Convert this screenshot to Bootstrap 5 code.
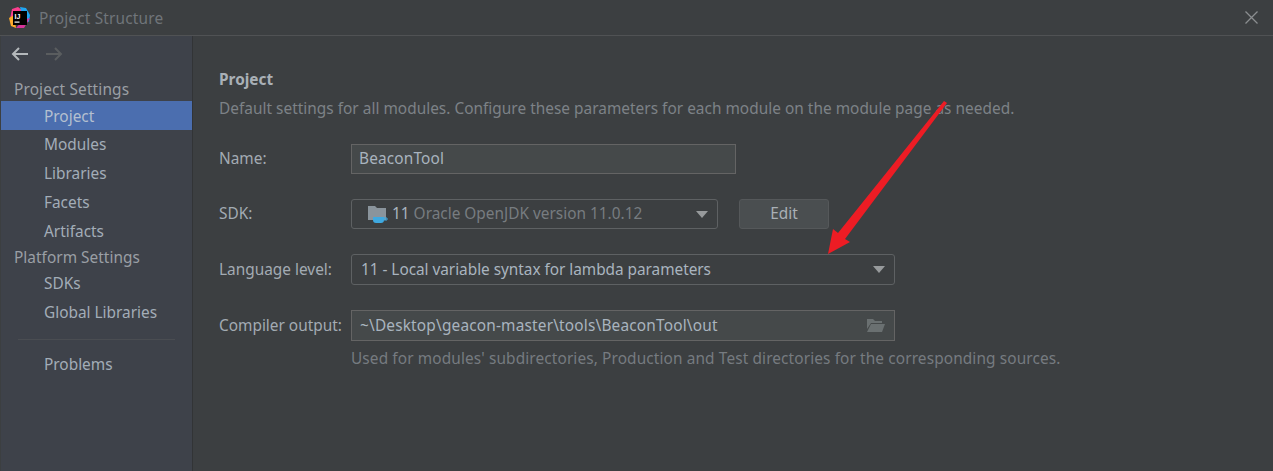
<!DOCTYPE html>
<html lang="en">
<head>
    <meta charset="UTF-8">
    <title>Project Structure</title>
    <link href="https://cdn.jsdelivr.net/npm/bootstrap@5.3.0/dist/css/bootstrap.min.css" rel="stylesheet">
    <style>
        html, body { height: 100%; }
        body {
            background: #3c3f41;
            color: #a9b2bb;
            font-family: "Noto Sans", sans-serif;
            font-size: 15.4px;
            line-height: 20px;
            overflow: hidden;
        }
        .dlg { height: 471px; position: relative; }
        .title-bar {
            height: 36px;
            padding-left: 9px;
            border-bottom: 1px solid #505254;
            color: #70757a;
            background: #3c3f41;
            letter-spacing: .18px;
        }
        .title-bar span { padding-top: 2px; }
        .side {
            width: 192px;
            height: 435px;
            margin-left: 1px;
            background: #3e424a;
            border-right: 1px solid #323436;
        }
        .nav-arrows { height: 36px; padding-left: 10px; gap: 16px; margin-bottom: 6px; }
        .side-head { height: 23px; padding-left: 13px; color: #9a9fa5; line-height: 23px; letter-spacing: .15px; }
        .side-head.tight { letter-spacing: .03px; }
        .side-item { height: 29px; padding-left: 43px; line-height: 29px; color: #a3adb8; }
        .side-item.on { background: #4b6eaf; color: #b4c0d0; line-height: 31px; }
        .side-sep { height: 1px; background: #4a4d52; margin: 12px 17px 10px 17px; }
        .pane { padding: 34px 0 0 26px; }
        .pane-title { font-weight: 700; color: #a9b0b6; height: 20px; }
        .pane-desc { color: #7d8287; margin-top: 9px; height: 20px; white-space: nowrap; letter-spacing: .02px; }
        .form-line { display: flex; align-items: center; margin-top: 25px; }
        .form-line > label { width: 132px; margin: 0; color: #a3abb3; }
        .fld {
            border: 1px solid #5e6163;
            display: flex;
            align-items: center;
            padding: 0 9px;
            color: #a9b4bf;
        }
        .fld-text { background: #45494a; border-color: #646464; }
        .fld-drop { background: #3c3f41; border-radius: 3px; }
        .w-name { width: 385px; height: 30px; padding-left: 7px; letter-spacing: .15px; }
        .w-sdk { width: 367px; height: 30px; }
        .w-wide { width: 544px; height: 31px; }
        .sdk-icon { margin: 0 4px 0 7px; }
        .lang-text { letter-spacing: -.04px; }
        .out-text { letter-spacing: .18px; margin-left: -1px; }
        .caret-tri { width: 0; height: 0; border-left: 6px solid transparent; border-right: 6px solid transparent; border-top: 7px solid #979a9c; }
        .edit-btn {
            width: 90px;
            height: 30px;
            margin-left: 21px;
            padding: 0;
            background: #4a4e50;
            border: 1px solid #55585a;
            border-radius: 3px;
            color: #a9b0b6;
            font-size: 15.4px;
            line-height: 20px;
        }
        .dim { color: #777c80; }
        .hint { color: #767b80; margin: 8px 0 0 132px; white-space: nowrap; letter-spacing: .115px; }
        .close-x { position: absolute; top: 11px; right: 15px; }
        .red-arrow { position: absolute; left: 820px; top: 95px; pointer-events: none; }
    </style>
</head>
<body>
<div class="dlg">
    <div class="title-bar d-flex align-items-center gap-2">
        <svg width="22" height="22" viewBox="0 0 22 22">
            <path d="M3 2 L9 0 L13 3 L5 14 L1 12 Z" fill="#fc3f8f"/>
            <path d="M0 11 L5 8 L7 21 L2 19 Z" fill="#fdab2b"/>
            <path d="M11 0 L17 1 L21 8 L20 15 L14 12 Z" fill="#1fa6f2"/>
            <path d="M14 13 L21 11 L15 21 L7 21 Z" fill="#d6339a"/>
            <rect x="4" y="4" width="14" height="14" fill="#000"/>
            <text x="5.5" y="11.5" font-size="7" font-weight="700" fill="#fff" font-family="Liberation Sans">IJ</text>
            <rect x="5.5" y="14.5" width="5" height="1.2" fill="#fff"/>
        </svg>
        <span>Project Structure</span>
    </div>
    <svg class="close-x" width="13" height="13" viewBox="0 0 13 13"><path d="M.5.5l12 12M12.5.5l-12 12" stroke="#8b8e90" stroke-width="1.3" fill="none"/></svg>

    <div class="d-flex">
        <div class="side flex-shrink-0">
            <div class="nav-arrows d-flex align-items-center">
                <svg width="18" height="14" viewBox="0 0 18 14"><path d="M17 7H2M8 1L2 7l6 6" stroke="#b4b8bb" stroke-width="2" fill="none"/></svg>
                <svg width="18" height="14" viewBox="0 0 18 14"><path d="M1 7h15M10 1l6 6-6 6" stroke="#5a5d5f" stroke-width="2" fill="none"/></svg>
            </div>
            <div class="side-head">Project Settings</div>
            <div class="side-item on">Project</div>
            <div class="side-item">Modules</div>
            <div class="side-item">Libraries</div>
            <div class="side-item">Facets</div>
            <div class="side-item">Artifacts</div>
            <div class="side-head tight">Platform Settings</div>
            <div class="side-item">SDKs</div>
            <div class="side-item">Global Libraries</div>
            <div class="side-sep"></div>
            <div class="side-item">Problems</div>
        </div>
        <div class="pane flex-grow-1">
            <div class="pane-title">Project</div>
            <div class="pane-desc">Default settings for all modules. Configure these parameters for each module on the module page as needed.</div>
            <div class="form-line">
                <label>Name:</label>
                <div class="fld fld-text w-name">BeaconTool</div>
            </div>
            <div class="form-line">
                <label>SDK:</label>
                <div class="fld fld-drop w-sdk">
                    <svg class="sdk-icon" width="20" height="19" viewBox="0 0 20 19">
                        <path d="M0 1h7l2 2h9v12H0z" fill="#8a949c"/>
                        <path d="M5 12h11v3a3 3 0 0 1-3 3H8a3 3 0 0 1-3-3z" fill="#3fa9e0"/>
                        <path d="M16 13h3v2h-3z" fill="none" stroke="#3fa9e0"/>
                    </svg>
                    <span>11&nbsp;<span class="dim">Oracle OpenJDK version 11.0.12</span></span>
                    <span class="caret-tri ms-auto"></span>
                </div>
                <button class="btn edit-btn" type="button">Edit</button>
            </div>
            <div class="form-line">
                <label>Language level:</label>
                <div class="fld fld-drop w-wide">
                    <span class="lang-text">11 - Local variable syntax for lambda parameters</span>
                    <span class="caret-tri ms-auto"></span>
                </div>
            </div>
            <div class="form-line">
                <label>Compiler output:</label>
                <div class="fld fld-text w-wide">
                    <span class="out-text">~\Desktop\geacon-master\tools\BeaconTool\out</span>
                    <svg class="ms-auto" width="19" height="15" viewBox="0 0 19 15">
                        <path d="M1 1h6l2 2h7v2H5L1 11z" fill="#6a7071"/>
                        <path d="M5 6h14l-3 8H1z" fill="#6a7071"/>
                    </svg>
                </div>
            </div>
            <div class="hint">Used for modules' subdirectories, Production and Test directories for the corresponding sources.</div>
        </div>
    </div>
    <svg class="red-arrow" width="130" height="165" viewBox="820 95 130 165">
        <path d="M944 101 L947 103 L845 239 L850 242 L828 254 L833 229 L838 233 Z" fill="#ed1c24"/>
    </svg>
</div>
<script src="https://cdn.jsdelivr.net/npm/bootstrap@5.3.0/dist/js/bootstrap.bundle.min.js"></script>
</body>
</html>
